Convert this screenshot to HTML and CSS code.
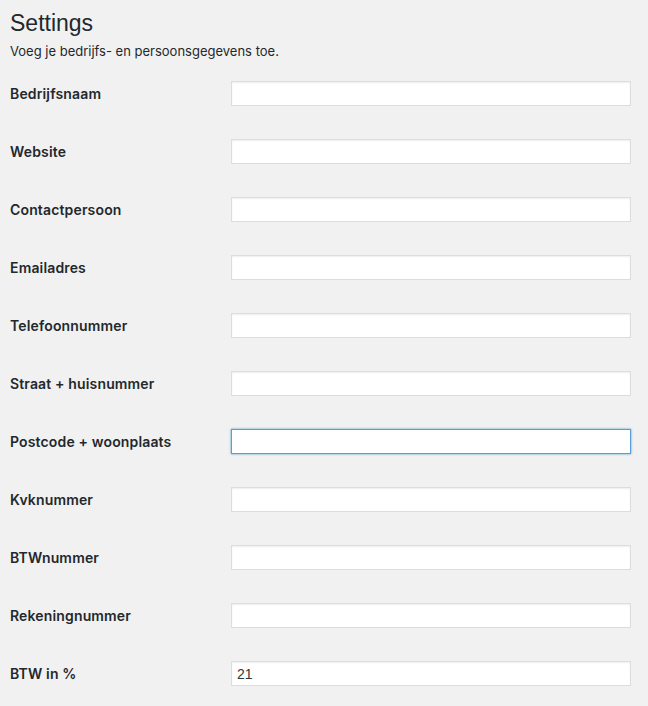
FILE: index.html
```html
<!DOCTYPE html>
<html lang="nl">
<head>
<meta charset="utf-8">
<title>Settings</title>
<link rel="stylesheet" href="styles.css">
</head>
<body>
<div class="wrap">
  <h1 class="title">Settings</h1>
  <p class="desc">Voeg je bedrijfs- en persoonsgegevens toe.</p>
  <form class="form">
    <div class="row"><label class="label">Bedrijfsnaam</label><input class="field" type="text"></div>
    <div class="row"><label class="label">Website</label><input class="field" type="text"></div>
    <div class="row"><label class="label">Contactpersoon</label><input class="field" type="text"></div>
    <div class="row"><label class="label">Emailadres</label><input class="field" type="text"></div>
    <div class="row"><label class="label">Telefoonnummer</label><input class="field" type="text"></div>
    <div class="row"><label class="label">Straat + huisnummer</label><input class="field" type="text"></div>
    <div class="row"><label class="label">Postcode + woonplaats</label><input class="field focus" type="text"></div>
    <div class="row"><label class="label">Kvknummer</label><input class="field" type="text"></div>
    <div class="row"><label class="label">BTWnummer</label><input class="field" type="text"></div>
    <div class="row"><label class="label">Rekeningnummer</label><input class="field" type="text"></div>
    <div class="row"><label class="label">BTW in %</label><input class="field" type="text" value="21"></div>
  </form>
</div>
</body>
</html>
```

FILE: styles.css
```css
html, body {
  margin: 0;
  padding: 0;
  background: #f1f1f1;
}
body {
  font-family: Inter, "Liberation Sans", Arial, sans-serif;
  color: #23282d;
  height: 706px;
  overflow: hidden;
}
.wrap {
  padding: 0 10px;
}
.title {
  margin: 0;
  padding: 9px 0 0;
  font-family: "Liberation Sans", Arial, sans-serif;
  font-size: 23px;
  font-weight: 400;
  line-height: 29px;
  color: #23282d;
}
.desc {
  margin: 3px 0 0;
  font-size: 13px;
  line-height: 20px;
  color: #23282d;
}
.form {
  margin-top: 4px;
}
.row {
  display: flex;
  align-items: center;
  padding: 16px 0 17px;
}
.label {
  width: 221px;
  flex: none;
  font-size: 14px;
  font-weight: 600;
  line-height: 20px;
  letter-spacing: 0.15px;
}
.field {
  box-sizing: border-box;
  width: 400px;
  height: 25px;
  margin: 0;
  padding: 2px 5px;
  border: 1px solid #ddd;
  background: #fff;
  box-shadow: inset 0 1px 2px rgba(0,0,0,0.07);
  font-family: "Liberation Sans", Arial, sans-serif;
  font-size: 14px;
  color: #32373c;
  outline: none;
}
.focus {
  border-color: #5b9dd9;
  box-shadow: 0 0 2px rgba(30,140,190,0.8);
}
```
